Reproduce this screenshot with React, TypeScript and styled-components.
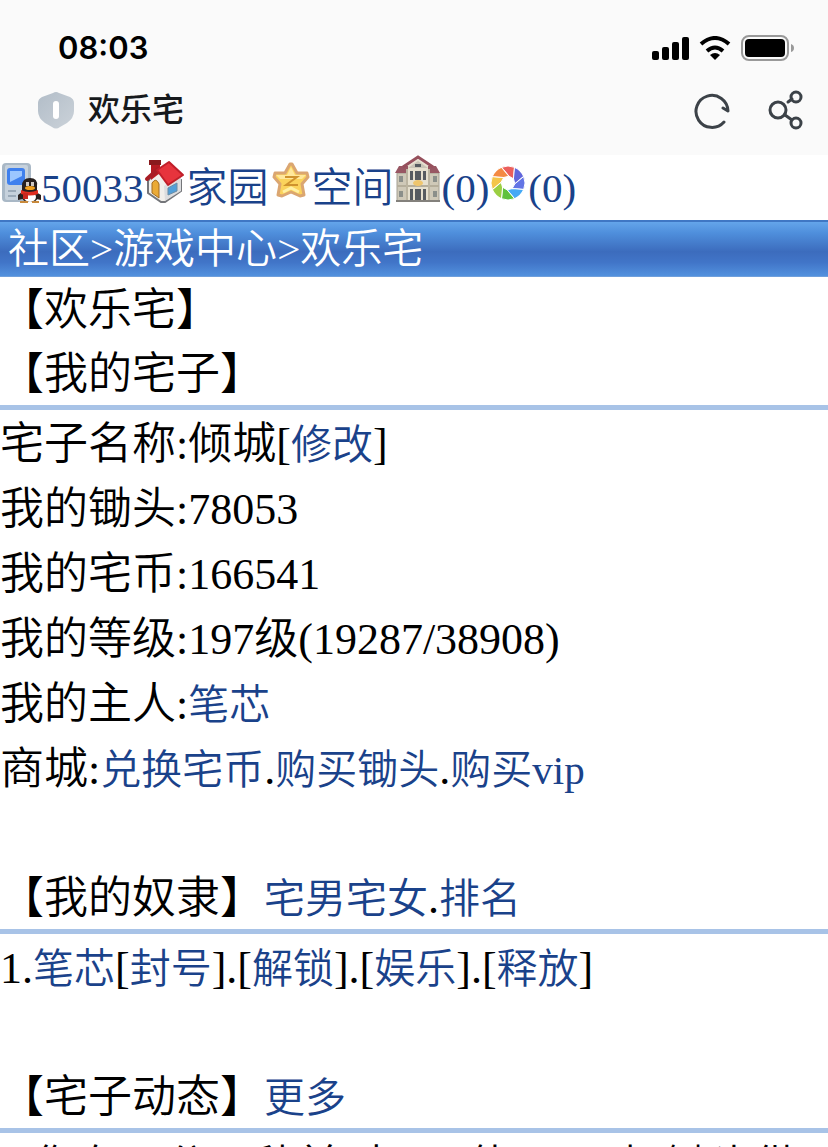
import React from 'react';
import styled, { createGlobalStyle } from 'styled-components';

const GlobalStyle = createGlobalStyle`
  * { box-sizing: border-box; }
  html, body { height: 100%; }
  #root { height: 100%; }
  body {
    margin: 0;
    background: #fff;
    color: #000;
    font-family: "Liberation Serif", "Noto Sans CJK SC", serif;
    font-size: 44px;
    font-weight: 350;
    line-height: 61px;
  }
`;

const Screen = styled.div`
  height: 100%;
  overflow: hidden;
`;

const Header = styled.header`
  background: #fafafa;
  font-family: Inter, "Noto Sans CJK SC", sans-serif;
`;

const StatusBar = styled.div`
  display: flex;
  justify-content: space-between;
  align-items: center;
  height: 80px;
  padding: 16px 33px 0 58px;
`;

const Clock = styled.time`
  font-size: 31px;
  line-height: 40px;
  font-weight: 600;
`;

const StatusIcons = styled.div`
  display: flex;
  align-items: center;
  gap: 10px;
`;

const TitleBar = styled.div`
  display: flex;
  align-items: center;
  height: 75px;
  padding: 0 24px 15px 37px;
`;

const SiteTitle = styled.h1`
  flex: 1;
  margin: 0 0 0 13px;
  color: #16191c;
  font-size: 32px;
  line-height: 48px;
  font-weight: 500;
`;

const IconButton = styled.button`
  display: flex;
  margin: 0 0 0 36px;
  padding: 0;
  border: 0;
  background: none;
`;

const Link = styled.a<{ $light?: boolean }>`
  color: ${(p) => (p.$light ? '#fff' : '#1a428a')};
  font-size: 41px;
  line-height: 40px;
  text-decoration: none;
`;

const Shortcuts = styled.nav`
  display: flex;
  align-items: flex-start;
  height: 65px;
  white-space: nowrap;
`;

const Shortcut = styled(Link)`
  display: flex;
  align-items: flex-start;
  line-height: 66px;
`;

const Picture = styled.svg`
  display: block;
  flex: none;
`;

const Breadcrumb = styled.nav`
  height: 57px;
  padding-left: 8px;
  border-top: 2px solid #3f77c4;
  border-bottom: 1px solid #6f9fdc;
  background: linear-gradient(#64a5ea, #4f8fdc 20%, #3c6cbd 55%, #4175c8 75%, #5291de);
  color: #fff;
  font-size: 41px;
  line-height: 54px;
  white-space: nowrap;
`;

const SectionTitle = styled.h2`
  margin: 0;
  padding-top: 4px;
  font-size: 44px;
  line-height: 60px;
  font-weight: 350;
`;

const SectionHead = styled.div`
  border-bottom: 5px solid #a8c3e7;
`;

const Section = styled.section<{ $spaced?: boolean }>`
  padding-bottom: ${(p) => (p.$spaced ? '65px' : '0')};
`;

const Row = styled.p`
  margin: 0;
  padding-top: 4px;
`;

const LogRow = styled(Row)`
  white-space: nowrap;
`;

const PhoneIcon = () => (
  <Picture width="41" height="50" viewBox="0 0 41 50" aria-hidden="true">
    <rect x="2" y="8" width="29" height="39" rx="4" fill="#a9b8c6" />
    <rect x="5" y="10" width="23" height="35" rx="2" fill="#c6d1dc" />
    <rect x="7" y="13" width="18" height="17" rx="3" fill="#3f80ee" />
    <path d="M10 16h12v5l-12 6z" fill="#9cc6ff" />
    <path d="M8 36h8M8 41h8" stroke="#9aa9b8" strokeWidth="2" />
    <path d="M22 37 18 40v5l5-1zM36 37l5 3v5l-5-1z" fill="#2a211f" />
    <path d="M22 38V31q0-8 8-8t7 8v7q3 9-7 9t-8-9z" fill="#27201f" />
    <ellipse cx="30" cy="42" rx="6" ry="5" fill="#fff" />
    <path d="M21 35q8 4 17 0v4q-8 3-17 0z" fill="#e02d20" />
    <path d="M23 38h5v6h-5z" fill="#c9281f" />
    <ellipse cx="30" cy="33" rx="5" ry="2" fill="#f2a11f" />
    <path d="M26 27h3v4h-3zM31 27h3v4h-3z" fill="#cfc9c4" />
    <path d="M20 47h8M32 47h7" stroke="#c98a3c" strokeWidth="2" />
  </Picture>
);

const HouseIcon = () => (
  <Picture width="43" height="50" viewBox="1 0 43 50" aria-hidden="true">
    <path d="M12 17 38 25V36L22 47H18L5 38V26z" fill="#f1efeb" stroke="#74767a" strokeWidth="2" />
    <path d="M21 31 38 22V36L22 46z" fill="#dcdddf" />
    <path d="M8 6h9v12L8 25z" fill="#b51b22" />
    <path d="M6 5h12v5H6z" fill="#8a1a1d" />
    <path d="M15 14 4 24" stroke="#a81d25" strokeWidth="4" strokeLinecap="round" />
    <path d="M14 15 26 7 40 20 25 30z" fill="#e7343d" stroke="#c01f2a" strokeWidth="2" strokeLinejoin="round" />
    <path d="M9 28q4-6 7 1v14l-7-5z" fill="#eaaa36" stroke="#a16b22" strokeWidth="1" />
    <path d="m25 33 9-5v8l-9 4z" fill="#529fd9" stroke="#6b8da5" />
  </Picture>
);

const StarIcon = () => (
  <Picture width="43" height="50" viewBox="0 0 43 50" aria-hidden="true">
    <path d="M21 9h2l5 9h10l1 4-6 7 2 11-4 1-9-4-9 4-4-1 2-11-6-7 1-4h10z" fill="#fbd35c" stroke="#dba671" strokeWidth="3" strokeLinejoin="round" />
    <path d="M22 12 26 20H37L33 24H11L7 20H18z" fill="#ffe89c" />
    <path d="M16 22h12L17 30h12" fill="none" stroke="#cf932e" strokeWidth="2" />
    <path d="m14 37 8-4 8 4" fill="none" stroke="#fff0a4" strokeWidth="3" />
  </Picture>
);

const BuildingIcon = () => (
  <Picture width="48" height="50" viewBox="0 0 48 50" aria-hidden="true">
    <path d="M3 18h42v28H3z" fill="#cfc9b8" stroke="#a49f92" />
    <path d="M12 12 24 4l12 8v34H12z" fill="#e6e0ce" />
    <path d="M1 18 5 11h9v7zM34 11h8l4 7H34z" fill="#985763" />
    <path d="M9 12 24 2l15 10" fill="none" stroke="#96505c" strokeWidth="3" />
    <path d="m14 13 10-7 10 7z" fill="#c9c4b6" />
    <path d="M21 9h6v3h-6zM16 16h3v9h-3zM21 16h6v9h-6zM29 16h3v9h-3zM16 34h3v11h-3zM21 34h6v11h-6zM29 34h3v11h-3z" fill="#565b60" />
    <path d="M5 21h4v6H5zM39 21h4v6h-4zM5 36h4v6H5zM39 36h4v6h-4z" fill="#8b8f8a" />
    <path d="M3 31h42" stroke="#b5ae9b" strokeWidth="2" />
    <path d="M13 14v31M35 14v31" stroke="#bcb5a1" strokeWidth="2" />
    <ellipse cx="24" cy="28" rx="5" ry="3" fill="#efc66d" />
    <path d="M2 46h44" stroke="#83817c" strokeWidth="2" />
  </Picture>
);

const bladeColors = ['#eb5f5c', '#6166dc', '#6375e5', '#45a9f5', '#5fc13c', '#9bcf42', '#f4c549', '#f48a43'];

const ApertureIcon = () => (
  <Picture width="39" height="50" viewBox="0 0 39 50" aria-hidden="true">
    <g transform="translate(19 28)">
      {bladeColors.map((color, i) => (
        <path
          key={color}
          d="M-6.500 -15.700A17 17 0 0 1 6.500 -15.700L5.500 -4.200L0.800 -6.900Z"
          fill={color}
          stroke="#fff"
          strokeWidth="1"
          transform={`rotate(${i * 45})`}
        />
      ))}
    </g>
  </Picture>
);

export default function App() {
  return (
    <Screen>
      <GlobalStyle />
      <Header>
        <StatusBar>
          <Clock>08:03</Clock>
          <StatusIcons>
            <svg width="38" height="24" viewBox="0 0 38 24" role="img" aria-label="信号">
              <rect x="1" y="15" width="7" height="9" rx="2" />
              <rect x="11" y="11" width="7" height="13" rx="2" />
              <rect x="21" y="6" width="7" height="18" rx="2" />
              <rect x="31" y="1" width="7" height="23" rx="2" />
            </svg>
            <svg width="32" height="24" viewBox="0 0 32 24" role="img" aria-label="无线网络">
              <path d="M2 8Q16-4 30 8M8 15Q16 8 24 15" fill="none" stroke="#000" strokeWidth="4" />
              <path d="M11 19Q16 15 21 19L16 24z" />
            </svg>
            <svg width="54" height="26" viewBox="0 0 54 26" role="img" aria-label="电量">
              <rect x="1" y="1" width="46" height="24" rx="7" fill="none" stroke="#999" strokeWidth="2" />
              <rect x="4" y="4" width="40" height="18" rx="4" />
              <path d="M50 9q3 1 3 4t-3 4z" fill="#999" />
            </svg>
          </StatusIcons>
        </StatusBar>
        <TitleBar>
          <svg width="38" height="38" viewBox="0 0 38 38" aria-hidden="true">
            <defs>
              <linearGradient id="shield" x2="1" y2="1">
                <stop stopColor="#b2bdc8" />
                <stop offset="1" stopColor="#cbd2d9" />
              </linearGradient>
            </defs>
            <path d="M16 2Q19 0 22 2L33 6Q37 8 37 12V20Q37 27 30 32L23 36Q19 39 15 36L8 32Q1 27 1 20V12Q1 8 5 6z" fill="url(#shield)" />
            <rect x="16" y="10" width="6" height="18" rx="3" fill="#fff" />
          </svg>
          <SiteTitle>欢乐宅</SiteTitle>
          <IconButton aria-label="刷新">
            <svg width="38" height="38" viewBox="0 0 38 38" fill="none" stroke="#3c4248" strokeWidth="3" strokeLinecap="round" strokeLinejoin="round">
              <path d="M30 31A16 16 0 1 1 34 20L29 17" />
            </svg>
          </IconButton>
          <IconButton aria-label="分享">
            <svg width="36" height="40" viewBox="0 0 36 40" fill="none" stroke="#3c4248" strokeWidth="3" strokeLinecap="round">
              <circle cx="10" cy="20" r="8" />
              <circle cx="28" cy="7" r="5" />
              <circle cx="28" cy="33" r="5" />
              <path d="m20 12 4-3M17 25l7 5" />
            </svg>
          </IconButton>
        </TitleBar>
      </Header>
      <Shortcuts>
        <Shortcut href="#qq"><PhoneIcon />50033</Shortcut>
        <Shortcut href="#home"><HouseIcon />家园</Shortcut>
        <Shortcut href="#space"><StarIcon />空间</Shortcut>
        <Shortcut href="#community"><BuildingIcon />(0)</Shortcut>
        <Shortcut href="#photos"><ApertureIcon />(0)</Shortcut>
      </Shortcuts>
      <Breadcrumb>
        <Link $light href="#community">社区</Link>&gt;<Link $light href="#games">游戏中心</Link>&gt;<Link $light href="#house">欢乐宅</Link>
      </Breadcrumb>
      <main>
        <SectionTitle>【欢乐宅】</SectionTitle>
        <Section $spaced>
          <SectionHead><SectionTitle>【我的宅子】</SectionTitle></SectionHead>
          <Row>宅子名称:倾城[<Link href="#rename">修改</Link>]</Row>
          <Row>我的锄头:78053</Row>
          <Row>我的宅币:166541</Row>
          <Row>我的等级:197级(19287/38908)</Row>
          <Row>我的主人:<Link href="#owner">笔芯</Link></Row>
          <Row>商城:<Link href="#coins">兑换宅币</Link>.<Link href="#hoes">购买锄头</Link>.<Link href="#vip">购买vip</Link></Row>
        </Section>
        <Section $spaced>
          <SectionHead><SectionTitle>【我的奴隶】<Link href="#all">宅男宅女</Link>.<Link href="#rank">排名</Link></SectionTitle></SectionHead>
          <Row>1.<Link href="#slave">笔芯</Link>[<Link href="#ban">封号</Link>].[<Link href="#unlock">解锁</Link>].[<Link href="#play">娱乐</Link>].[<Link href="#free">释放</Link>]</Row>
        </Section>
        <Section>
          <SectionHead><SectionTitle>【宅子动态】<Link href="#more">更多</Link></SectionTitle></SectionHead>
          <LogRow>1.您在10分21秒前对<Link href="#player">小月</Link>使用了1把锄头供</LogRow>
        </Section>
      </main>
    </Screen>
  );
}
